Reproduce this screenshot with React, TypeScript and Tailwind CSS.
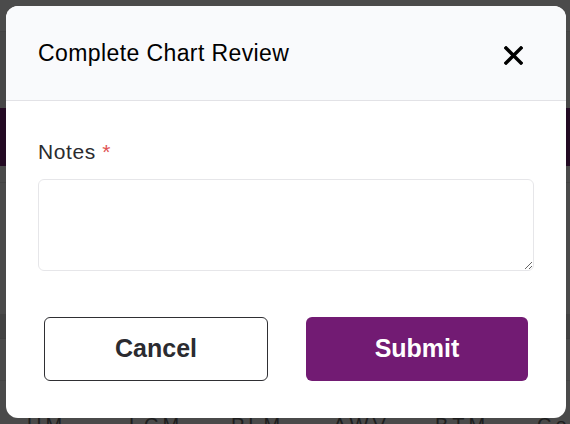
import React from 'react';

const font = { fontFamily: '"Liberation Sans", Arial, sans-serif' };

function CloseIcon() {
  return (
    <svg width="19" height="19" viewBox="0 0 19 19" aria-hidden="true">
      <path d="M2 2 L17 17 M17 2 L2 17" stroke="#000" strokeWidth="3.4" strokeLinecap="square" />
    </svg>
  );
}

export default function App() {
  const columns = ['UM', 'LCM', 'PLM', 'AWV', 'BTM', 'Com'];

  return (
    <div className="relative w-[570px] h-[424px] overflow-hidden bg-[#4a4a4a]" style={font}>
      {/* page behind the dimmed overlay */}
      <div className="flex flex-col">
        <div className="h-[32px] bg-[#4b4b4b] border-b border-[#434343]" />
        <div className="h-[76px] bg-[#474747]" />
        <div className="h-[58px] bg-[#230a23]" />
        <div className="h-[17px] bg-[#4a4a4a] border-b border-[#434343]" />
        <div className="h-[131px] bg-[#4a4a4a]" />
        <div className="h-[25px] bg-[#424242] border-b border-[#3f3f3f]" />
        <div className="h-[42px] bg-[#4a4a4a] border-b border-[#444]" />
        <div className="flex pt-[32px] pl-[27px] text-[20px] leading-[24px] text-[#1e1e1e] tracking-[4px]">
          {columns.map((c) => (
            <span key={c} className="w-[102px] shrink-0">
              {c}
            </span>
          ))}
        </div>
      </div>

      {/* modal */}
      <div className="absolute left-[6px] top-[6px] w-[560px] h-[412px] bg-white rounded-[12px] overflow-hidden flex flex-col">
        <div className="h-[95px] shrink-0 bg-[#f9fafc] border-b border-[#e2e2e6] flex items-center justify-between pl-[32px] pr-[43px]">
          <h2 className="text-[23px] tracking-[0.4px] text-black">Complete Chart Review</h2>
          <button className="mt-[5px]">
            <CloseIcon />
          </button>
        </div>

        <div className="flex flex-col px-[32px] pt-[38px]">
          <label className="text-[21px] leading-[25px] tracking-[0.6px] text-[#2b2b2f] mb-[15px]">
            Notes <span className="text-[#e05252]">*</span>
          </label>
          <textarea className="h-[92px] w-full rounded-[6px] border border-[#e6e6e9] bg-white outline-none" />

          <div className="flex gap-[38px] px-[6px] mt-[46px]">
            <button className="flex-1 h-[64px] rounded-[6px] border border-[#2f2f33] bg-white text-[25px] font-bold text-[#2b2b30]">
              Cancel
            </button>
            <button className="flex-1 h-[64px] rounded-[6px] bg-[#721b73] text-[25px] font-bold text-white">
              Submit
            </button>
          </div>
        </div>
      </div>
    </div>
  );
}
